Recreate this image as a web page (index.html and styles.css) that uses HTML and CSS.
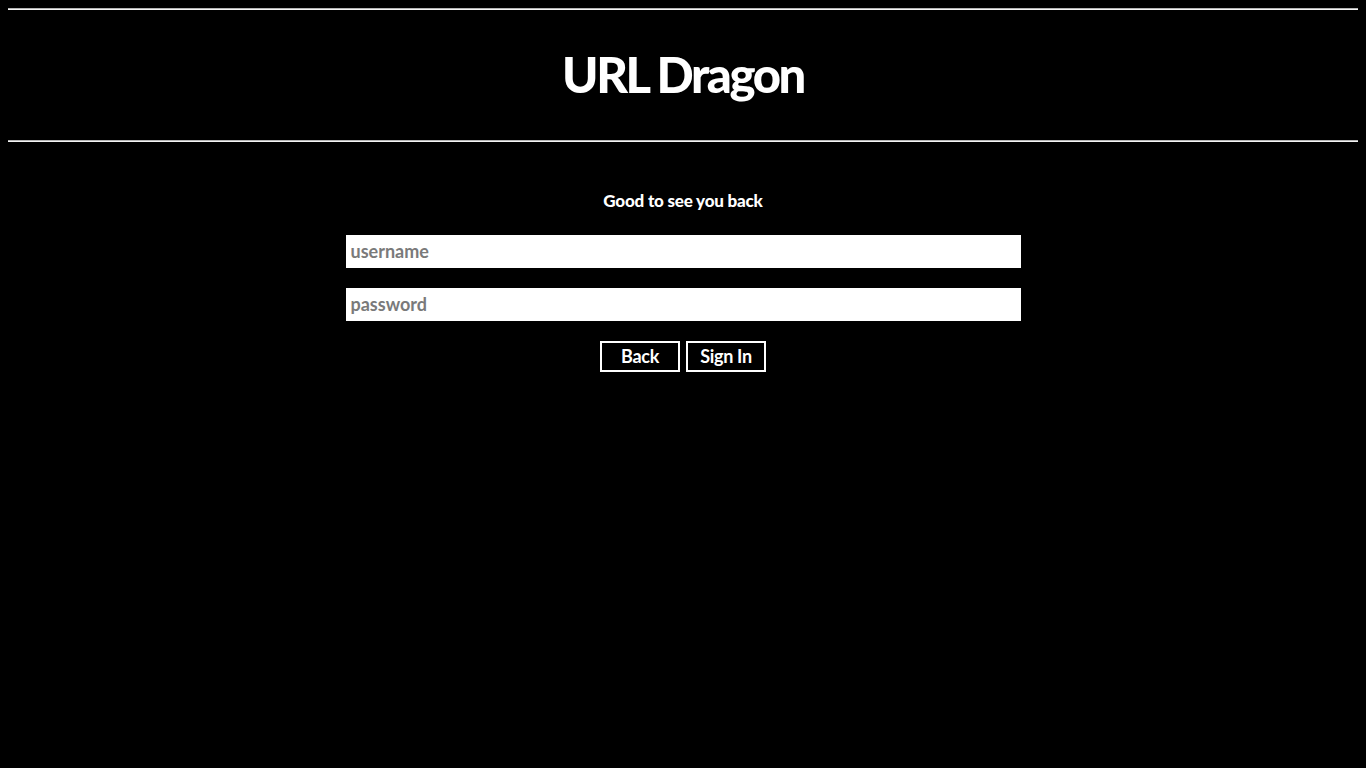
FILE: index.html
```html
<!DOCTYPE html>
<html lang="en">
<head>
<meta charset="utf-8">
<title>URL Dragon</title>
<link rel="stylesheet" href="styles.css">
</head>
<body>
<header class="site-header">
  <hr class="rule">
  <h1 class="brand">URL Dragon</h1>
  <hr class="rule">
</header>
<main class="login">
  <p class="greeting">Good to see you back</p>
  <form class="login-form">
    <input class="field" type="text" placeholder="username">
    <input class="field" type="password" placeholder="password">
    <div class="actions">
      <button type="button" class="btn">Back</button>
      <button type="submit" class="btn">Sign In</button>
    </div>
  </form>
</main>
</body>
</html>
```
FILE: styles.css
```css
html, body {
  background: #000;
}
body {
  margin: 8px;
  color: #fff;
  font-family: "Lato", "Open Sans", sans-serif;
}
.rule {
  margin: 0;
  height: 0;
  border: none;
  border-top: 1px solid #b4b4b4;
  border-bottom: 1px solid #f4f4f4;
}
.brand {
  margin: 0;
  height: 130px;
  line-height: 128px;
  text-align: center;
  font-size: 49px;
  font-weight: 900;
  letter-spacing: -2.4px;
  color: #fff;
}
.login {
  display: flex;
  flex-direction: column;
  align-items: center;
  padding-top: 48px;
}
.greeting {
  margin: 0;
  height: 24px;
  line-height: 22px;
  font-size: 17px;
  font-weight: 900;
  letter-spacing: -0.2px;
}
.login-form {
  margin-top: 21px;
  width: 50%;
  display: flex;
  flex-direction: column;
  align-items: center;
  gap: 20px;
}
.field {
  box-sizing: border-box;
  width: 100%;
  height: 33px;
  margin: 0;
  border: none;
  outline: none;
  background: #fff;
  padding: 0 5px 2px;
  font-family: inherit;
  font-size: 18px;
  font-weight: 700;
  color: #333;
}
.field::placeholder {
  color: #7a7a7a;
}
.actions {
  display: flex;
  gap: 6px;
}
.btn {
  box-sizing: border-box;
  width: 80px;
  height: 31px;
  margin: 0;
  padding: 0 0 2px;
  background: #000;
  border: 2px solid #fff;
  color: #fff;
  font-family: inherit;
  font-size: 18px;
  font-weight: 700;
  letter-spacing: -0.3px;
  cursor: pointer;
}
```
